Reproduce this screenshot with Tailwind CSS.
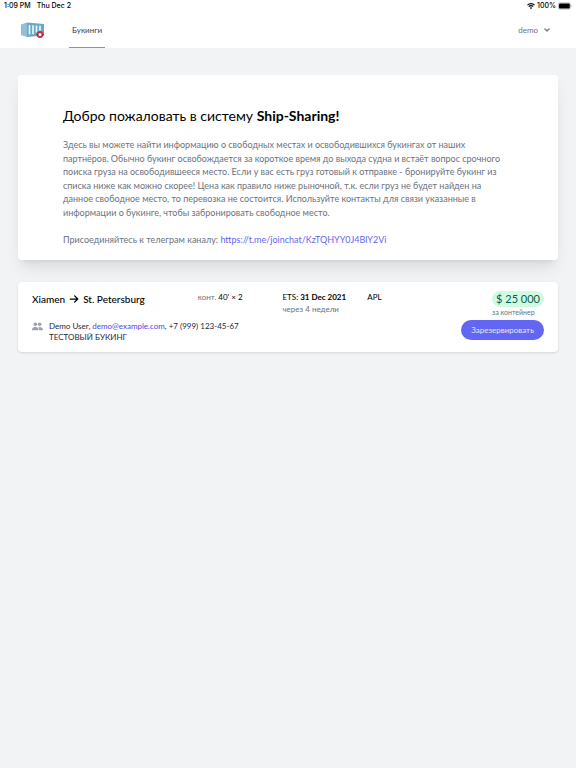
<!DOCTYPE html>
<html lang="ru">
<head>
  <meta charset="utf-8">
  <meta name="viewport" content="width=device-width, initial-scale=1">
  <title>Ship-Sharing</title>
  <script src="https://cdn.jsdelivr.net/npm/@tailwindcss/browser@4"></script>
</head>
<body class="min-h-screen bg-[#f2f3f5] font-[Lato,'Open_Sans',sans-serif] text-[8px] text-black">

  <header class="bg-white">
    <!-- Status bar -->
    <div class="h-3 px-1 flex items-center justify-between font-[Inter,sans-serif] text-[7px] font-medium">
      <div class="flex gap-1.5">
        <span>1:09 PM</span>
        <span>Thu Dec 2</span>
      </div>
      <div class="flex items-center gap-0.5">
        <svg class="w-2 h-2" viewBox="0 0 16 16" fill="none" stroke="currentColor" stroke-width="2.4">
          <path d="M1 6.2a10 10 0 0 1 14 0M3.6 9.2a6.2 6.2 0 0 1 8.8 0" />
          <path d="M8 14.5l-2.4-2.8a3.4 3.4 0 0 1 4.8 0z" fill="currentColor" stroke="none" />
        </svg>
        <span>100%</span>
        <svg class="w-3.5 h-2" viewBox="0 0 28 16">
          <rect x="0.8" y="1.8" width="24" height="12.4" rx="3.4" fill="none" stroke="#777" stroke-width="1" />
          <rect x="2" y="3" width="21.600" height="10" rx="2.2" />
          <path d="M26 6q2 2 0 4z" fill="#777" />
        </svg>
      </div>
    </div>

    <!-- Navigation -->
    <nav class="h-9 pl-5 pr-6 flex items-stretch justify-between">
      <div class="flex gap-[25px]">
        <a href="#" class="flex items-center" aria-label="Ship-Sharing">
          <svg class="w-6 h-5" viewBox="0 0 48 40">
            <path d="M2 9l12-4v29L2 30z" fill="#8fbcd2" />
            <path d="M14 5l34 3v23l-34 3z" fill="#6aa9c6" />
            <path d="M6 8v23M10 7v25" stroke="#a5cbdc" stroke-width="1" />
            <path d="M19 10v19M26 10.500v18M33 11v14M40 11.500v10" stroke="#e9f4f8" stroke-width="3.400" />
            <circle cx="40" cy="29" r="5" fill="#fff" stroke="#c22f43" stroke-width="3.600" />
            <path d="M33 29h3M44 29h3" stroke="#8f2032" stroke-width="2.500" />
          </svg>
        </a>
        <a href="#" class="px-[3px] flex items-center border-b border-[#818cf8] text-gray-700">Букинги</a>
      </div>
      <button class="flex items-center gap-1 text-[#6b7280]">
        demo
        <svg class="w-2.5 h-2.5" viewBox="0 0 20 20" fill="currentColor" stroke="currentColor">
          <path d="M5.300 7.300a1 1 0 0 1 1.400 0L10 10.600l3.300-3.300a1 1 0 1 1 1.400 1.400l-4 4a1 1 0 0 1-1.400 0l-4-4a1 1 0 0 1 0-1.400z" />
        </svg>
      </button>
    </nav>
  </header>

  <main class="px-[18px] pt-[27px] flex flex-col gap-[22px]">
    <section class="bg-white rounded shadow-lg px-[45px] pt-8 pb-[14px]">
      <h1 class="text-[14px] leading-[18px]">Добро пожаловать в систему <b>Ship-Sharing!</b></h1>
      <div class="mt-[13px] text-[9px] leading-normal text-[#6b7280]">
        <p>
          Здесь вы можете найти информацию о свободных местах и освободившихся букингах от наших<br>
          партнёров. Обычно букинг освобождается за короткое время до выхода судна и встаёт вопрос срочного<br>
          поиска груза на освободившееся место. Если у вас есть груз готовый к отправке - бронируйте букинг из<br>
          списка ниже как можно скорее! Цена как правило ниже рыночной, т.к. если груз не будет найден на<br>
          данное свободное место, то перевозка не состоится. Используйте контакты для связи указанные в<br>
          информации о букинге, чтобы забронировать свободное место.
        </p>
        <br>
        <p>Присоединяйтесь к телеграм каналу: <a href="https://t.me/joinchat/KzTQHYY0J4BlY2Vi" class="text-[#6366f1]">https://t.me/joinchat/KzTQHYY0J4BlY2Vi</a></p>
      </div>
    </section>

    <article class="bg-white rounded shadow-sm px-[14px] pt-[9px] pb-[9px] flex justify-between">
      <div class="grow">
        <div class="grid grid-cols-[166fr_85fr_85fr_94fr] leading-[12px]">
          <h2 class="pt-px flex items-center gap-1 self-start text-[10px] leading-[14px] font-medium">
            Xiamen
            <svg class="w-2.5 h-2.5" viewBox="0 0 16 16" fill="none" stroke="currentColor" stroke-width="2" stroke-linecap="round" stroke-linejoin="round">
              <path d="M2 8h12M9 3l5 5-5 5" />
            </svg>
            St. Petersburg
          </h2>
          <p><span class="text-[#6b7280]">конт.</span> 40' × 2</p>
          <div>
            <p>ETS: <b>31 Dec 2021</b></p>
            <p class="text-[#6b7280]">через 4 недели</p>
          </div>
          <p>APL</p>
        </div>
        <div class="mt-1.5 flex gap-1.5 leading-[11px] text-gray-800">
          <svg class="w-[11px] h-[11px] text-gray-400" viewBox="0 0 20 20" fill="currentColor">
            <circle cx="6" cy="6" r="3.200" />
            <circle cx="14" cy="6" r="3.200" />
            <path d="M0 17a6 6 0 0 1 12 0zM13 17a8 8 0 0 0-1.600-5A5.500 5.500 0 0 1 20 17z" />
          </svg>
          <div>
            <p>Demo User, <a href="mailto:demo@example.com" class="text-[#4f46e5]">demo@example.com</a>, +7 (999) 123-45-67</p>
            <p>ТЕСТОВЫЙ БУКИНГ</p>
          </div>
        </div>
      </div>
      <div class="shrink-0 flex flex-col items-end">
        <div>
          <p class="px-1 rounded-full bg-[#d1fae5] text-[11px] leading-4 text-[#065f46]">$ 25 000</p>
          <p class="text-[7px] leading-[10px] text-[#6b7280]">за контейнер</p>
        </div>
        <button class="mt-[3px] h-5 px-2.5 rounded-full bg-[#6366f1] text-indigo-100">Зарезервировать</button>
      </div>
    </article>
  </main>

</body>
</html>
